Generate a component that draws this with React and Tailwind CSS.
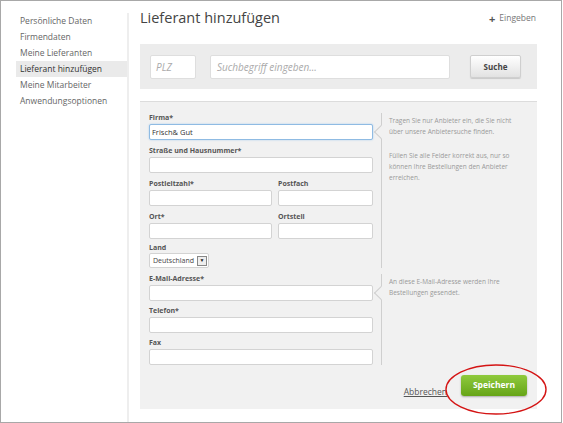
import React from "react";

const menu = [
  "Persönliche Daten",
  "Firmendaten",
  "Meine Lieferanten",
  "Lieferant hinzufügen",
  "Meine Mitarbeiter",
  "Anwendungsoptionen",
];

const Field = ({ label, value, focus, className = "" }) => (
  <div className={className}>
    <div className="text-[7px] leading-[10px] font-bold text-[#555] mb-px">{label}</div>
    <div
      className={
        "h-[16px] rounded-[2px] bg-white px-[2px] text-[7.5px] leading-[14px] text-[#333] border " +
        (focus ? "border-[#8fbbe3] shadow-[0_0_2px_#a9cdef]" : "border-[#d3d3d3]")
      }
    >
      {value}
    </div>
  </div>
);

const Help = ({ children }) => (
  <div className="relative ml-[8px] border-l border-[#cfcfcf] pl-[7px] pt-[2px] w-[138px] shrink-0 text-[6.5px] leading-[11px] text-[#999]">
    <span className="absolute left-[-6px] top-[14px] w-[10px] h-[10px] rotate-45 border-l border-b border-[#cfcfcf] bg-[#f1f1f1]" />
    {children}
  </div>
);

export default function App() {
  return (
    <div className="relative w-[562px] h-[423px] border border-[#a8a8a8] bg-white flex font-['Open_Sans',sans-serif] overflow-hidden">
      <aside className="w-[128px] mt-[12px] border-r-2 border-[#eeeeee] pl-[15px] shrink-0">
        {menu.map((m) => (
          <div
            key={m}
            className={
              "h-[16px] leading-[16px] px-[4px] text-[8.5px] " +
              (m === "Lieferant hinzufügen" ? "bg-[#eaeaea] text-[#333]" : "text-[#666]")
            }
          >
            {m}
          </div>
        ))}
      </aside>

      <main className="pl-[11px] w-[408px]">
        <div className="h-[34px] flex items-center justify-between pr-[1px]">
          <h1 className="text-[14.5px] text-[#444]">Lieferant hinzufügen</h1>
          <span className="text-[8.5px] text-[#777] flex items-center gap-[4px]">
            <span className="text-[11px] font-bold text-[#555] leading-none">+</span>
            Eingeben
          </span>
        </div>

        <div className="mt-[9px] h-[45px] bg-[#ececec] flex items-center pl-[10px]">
          <div className="w-[46px] h-[24px] bg-white border border-[#dedede] rounded-[2px] px-[5px] text-[10px] italic text-[#aaa] leading-[22px]">
            PLZ
          </div>
          <div className="ml-[14px] w-[240px] h-[24px] bg-white border border-[#dedede] rounded-[2px] px-[6px] text-[10px] italic text-[#aaa] leading-[22px]">
            Suchbegriff eingeben...
          </div>
          <div className="ml-[20px] w-[51px] h-[23px] rounded-[2px] border border-[#cfcfcf] bg-gradient-to-b from-white to-[#e2e2e2] shadow-[0_1px_1px_rgba(0,0,0,0.15)] flex items-center justify-center text-[8px] font-bold text-[#444]">
            Suche
          </div>
        </div>

        <div className="mt-[12px] h-[308px] bg-[#f1f1f1] border-t border-[#dcdcdc] pt-[11px] pl-[9px] pr-[10px] flex flex-col">
          <div className="flex">
            <div className="w-[224px] shrink-0">
              <Field label="Firma*" value="Frisch& Gut" focus />
              <Field label="Straße und Hausnummer*" className="mt-[6px]" />
              <div className="flex gap-[6px] mt-[6px]">
                <Field label="Postleitzahl*" className="w-[123px]" />
                <Field label="Postfach" className="flex-1" />
              </div>
              <div className="flex gap-[6px] mt-[6px]">
                <Field label="Ort*" className="w-[123px]" />
                <Field label="Ortsteil" className="flex-1" />
              </div>
              <div className="mt-[4px]">
                <div className="text-[7px] leading-[10px] font-bold text-[#555]">Land</div>
                <div className="w-[60px] h-[15px] bg-white border border-[#d3d3d3] rounded-[2px] flex items-center justify-between pl-[3px] pr-[1px] text-[7px] leading-none text-[#444]">
                  Deutschland
                  <span className="w-[10px] h-[10px] border border-[#888] bg-[#eee] flex items-center justify-center text-[5px] leading-none text-[#222]">
                    ▼
                  </span>
                </div>
              </div>
            </div>
            <Help>
              <p>Tragen Sie nur Anbieter ein, die Sie nicht über unsere Anbietersuche finden.</p>
              <p className="mt-[13px]">Füllen Sie alle Felder korrekt aus, nur so können Ihre Bestellungen den Anbieter erreichen.</p>
            </Help>
          </div>

          <div className="flex mt-[6px]">
            <div className="w-[224px] shrink-0">
              <Field label="E-Mail-Adresse*" />
              <Field label="Telefon*" className="mt-[5px]" />
              <Field label="Fax" className="mt-[5px]" />
            </div>
            <Help>
              <p>An diese E-Mail-Adresse werden Ihre Bestellungen gesendet.</p>
            </Help>
          </div>

          <div className="mt-auto mb-[10px] flex items-center justify-end gap-[14px]">
            <a className="text-[8.5px] text-[#555] underline mt-[14px]">Abbrechen</a>
            <div className="w-[66px] h-[21px] rounded-[3px] bg-gradient-to-b from-[#8fca3c] to-[#66a516] shadow-[0_1px_2px_rgba(0,0,0,0.3)] flex items-center justify-center text-[8.5px] font-bold text-white">
              Speichern
            </div>
          </div>
        </div>
      </main>

      <svg className="absolute left-0 top-0 pointer-events-none" width="562" height="423">
        <ellipse cx="495" cy="388.5" rx="50" ry="24.5" fill="none" stroke="#d41414" strokeWidth="1.4" />
      </svg>
    </div>
  );
}
